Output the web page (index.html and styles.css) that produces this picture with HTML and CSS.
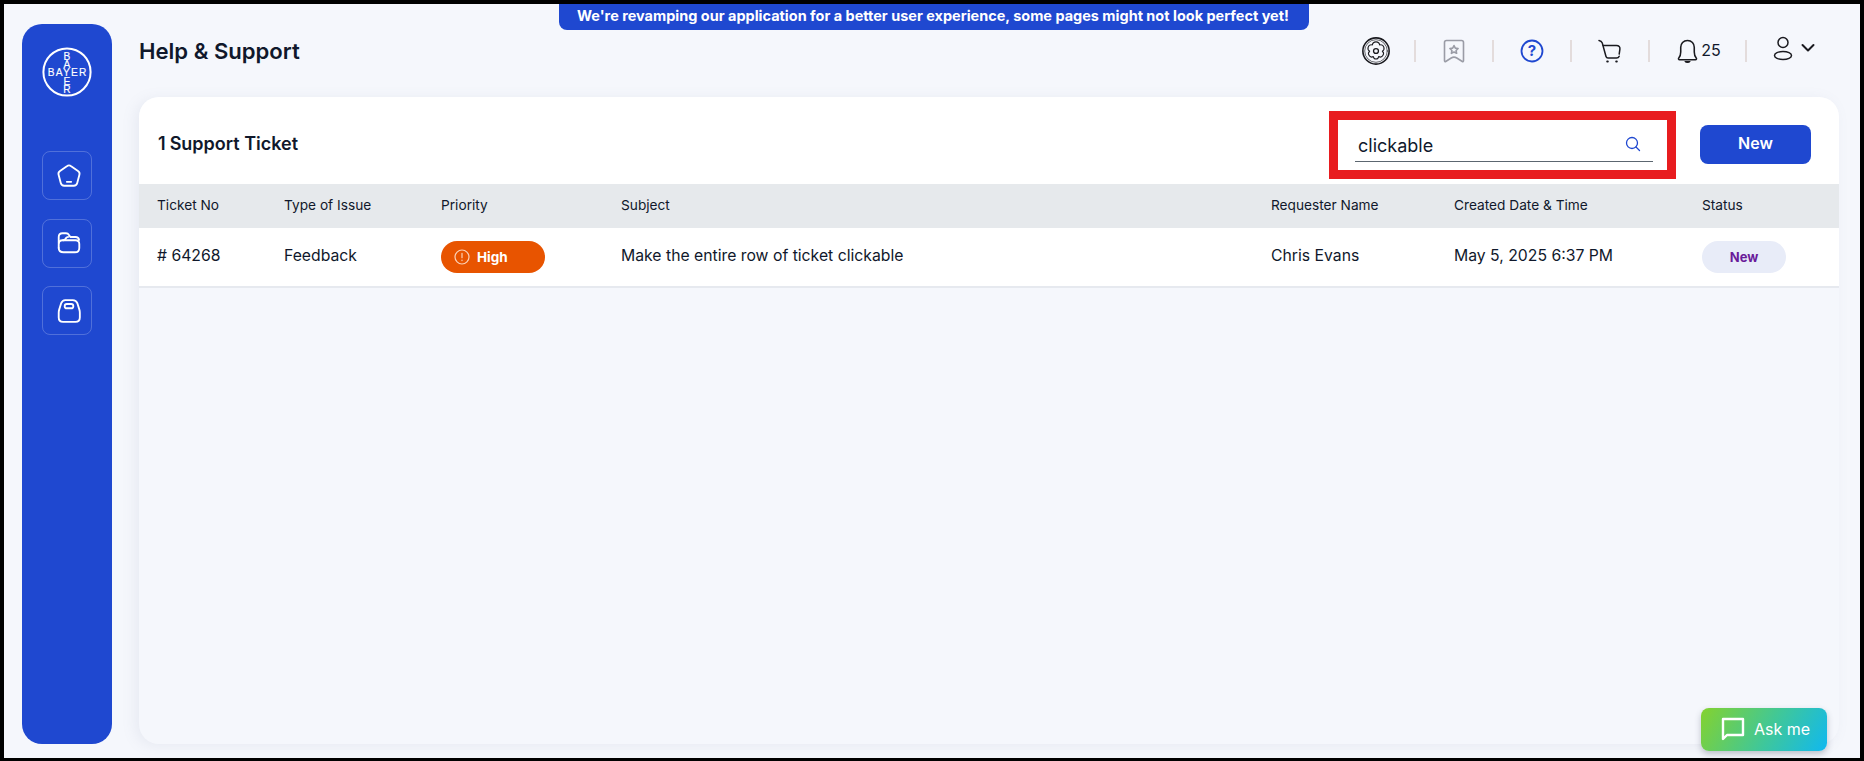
FILE: index.html
```html
<!DOCTYPE html>
<html lang="en">
<head>
<meta charset="utf-8">
<title>Help &amp; Support</title>
<link rel="stylesheet" href="styles.css">
</head>
<body>
<div class="frame">
  <div class="banner">We're revamping our application for a better user experience, some pages might not look perfect yet!</div>
  <aside class="sidebar">
    <svg class="logo" viewBox="0 0 50 50" width="50" height="50">
      <circle cx="25" cy="25" r="23.6" fill="none" stroke="#fff" stroke-width="2"/>
      <g class="logo-text" text-anchor="middle">
        <text class="logo-h" x="25.600" y="29.300">BAYER</text>
        <text x="25" y="12.500">B</text>
        <text x="25" y="20.900">A</text>
        <text x="25" y="37.700">E</text>
        <text x="25" y="46">R</text>
      </g>
    </svg>
    <nav class="side-nav">
      <a class="side-btn"><svg viewBox="0 0 24 24" width="26" height="26" class="side-icon"><path d="M10 2.900 3.700 7.300C2.500 8.100 2 9.500 2.400 10.900l2 7.600c.4 1.500 1.600 2.500 3.200 2.500h8.800c1.600 0 2.800-1 3.200-2.500l2-7.600c.4-1.400-.1-2.800-1.300-3.600L14 2.900c-1.200-.9-2.800-.9-4 0Z"/><path d="M10 17.400h4"/></svg></a>
      <a class="side-btn"><svg viewBox="0 0 24 24" width="26" height="26" class="side-icon"><path d="M2.500 12V6.500c0-2 1.500-3.500 3.500-3.500h3.200c1.200 0 2.200.6 2.800 1.600L13.200 6.500H18c1.800 0 3 1 3.300 2.700"/><path d="M2.500 16.500V13c0-2 1.500-3.500 3.500-3.500h.6c.9 0 1.500-.4 2-1.100l.6-.9c.5-.7 1.200-1.100 2-1.100"/><path d="M6.500 9.500H18c2 0 3.500 1.500 3.500 3.500v3.500c0 2.500-1.500 4-4 4H7c-2.800 0-4.500-1.500-4.500-4"/></svg></a>
      <a class="side-btn"><svg viewBox="0 0 24 24" width="26" height="26" class="side-icon"><path d="M8.500 2h7c2 0 3.500 1 4.300 3l1.700 5.500c.3 1 .5 2 .5 3V18c0 2.500-1.500 4-4 4H6.500c-2.500 0-4-1.500-4-4v-4.500c0-1 .2-2 .5-3L4.700 5c.8-2 1.800-3 3.800-3Z"/><rect x="8" y="5.500" width="8" height="4" rx="2"/></svg></a>
    </nav>
  </aside>
  <main class="main">
    <header class="topbar">
      <h1 class="title">Help &amp; Support</h1>
      <div class="tools">
        <span class="tool"><svg viewBox="0 0 26 26" width="28" height="28" class="ic-dark"><circle cx="13" cy="13" r="12.200" stroke-width="1.500"/><circle cx="13" cy="13" r="10.500" stroke-width=".6"/><path stroke-width="1" d="M13 4.500c1.900 0 3.200 1.300 3.400 2.900 1.600-.4 3.400.4 3.900 2.100.5 1.600-.2 3-1.400 3.700 1.100.9 1.400 2.500.6 3.800-.8 1.500-2.600 1.900-4 1.200-.3 1.400-1.400 2.300-2.500 2.300s-2.200-.9-2.500-2.300c-1.400.7-3.200.3-4-1.200-.8-1.300-.5-2.900.6-3.800-1.200-.7-1.900-2.100-1.400-3.700.5-1.700 2.300-2.500 3.900-2.100C9.800 5.800 11.100 4.500 13 4.500Z"/><circle cx="13" cy="13" r="2.300" stroke-width="1.200"/></svg></span>
        <span class="tool"><svg viewBox="0 0 22 24" width="22" height="24" class="ic-gray"><path d="M3.500 1.500h15c1.100 0 2 .9 2 2v18.300c0 .6-.6 1-1.200.7L13.800 19c-1.800-1.100-3.800-1.100-5.600 0l-5.500 3.500c-.6.300-1.200-.1-1.200-.7V3.500c0-1.100.9-2 2-2Z"/><path d="m11 6.500 1.300 2.600 2.800.4-2 2 .5 2.800-2.600-1.300-2.600 1.300.5-2.800-2-2 2.800-.4Z"/></svg></span>
        <span class="tool"><svg viewBox="0 0 24 24" width="24" height="24" class="ic-blue"><circle cx="12" cy="12" r="10.500"/></svg><b class="help-mark">?</b></span>
        <span class="tool"><svg viewBox="0 0 24 24" width="24" height="24" class="ic-dark"><path stroke-width="1.500" d="M1 1.500c1.600.2 2.700 1 3.300 2.600L8 17.500c.3 1 1 1.500 2 1.500h8.500c1.300 0 2.200-.6 2.700-1.800"/><path stroke-width="1.500" d="M5.200 6.500h13.300c2.400 0 3.700 1.500 3.400 3.600l-.7 5"/><path stroke-width="2" d="M9.200 22.500h.6M18.200 22.500h.6"/></svg></span>
        <span class="tool tool-bell"><svg viewBox="0 0 20 24" width="21" height="25" class="ic-dark"><path stroke-width="1.500" d="M10 1.500c-4 0-6.500 3-6.500 6.500v4.500c0 3-.8 4.700-2 6-.4.500 0 1.500.8 1.500h15.400c.8 0 1.200-1 .8-1.500-1.200-1.300-2-3-2-6V8c0-3.500-2.500-6.500-6.500-6.500Z"/><path d="M7.500 21.500c.5 1.400 4.500 1.400 5 0Z" class="bell-clap"/></svg><span class="bell-count">25</span></span>
        <span class="tool tool-user"><svg viewBox="0 0 20 26" width="20" height="26" class="ic-dark"><circle cx="10" cy="6.500" r="5" stroke-width="1.500"/><ellipse cx="10" cy="19.500" rx="8.500" ry="4" stroke-width="1.500"/></svg><svg viewBox="0 0 14 10" width="14" height="10" class="ic-dark chev"><path stroke-width="2" d="m1.500 2 5.500 5.500L12.500 2"/></svg></span>
      </div>
    </header>
    <section class="card">
      <div class="card-head">
        <h2 class="count"><span class="count-num">1</span>Support Ticket</h2>
        <div class="search-mark">
          <div class="search">
            <span class="search-text">clickable</span>
            <svg viewBox="0 0 16 16" width="16" height="16" class="ic-search"><circle cx="7" cy="7" r="5.500"/><path d="m11 11 3.500 3.500"/></svg>
          </div>
        </div>
        <button class="btn-new">New</button>
      </div>
      <table class="tickets">
        <colgroup>
          <col class="c1"><col class="c2"><col class="c3"><col class="c4"><col class="c5"><col class="c6"><col class="c7">
        </colgroup>
        <thead>
          <tr><th>Ticket No</th><th>Type of Issue</th><th>Priority</th><th>Subject</th><th>Requester Name</th><th>Created Date &amp; Time</th><th>Status</th></tr>
        </thead>
        <tbody>
          <tr>
            <td># 64268</td>
            <td>Feedback</td>
            <td><span class="pill-high"><svg viewBox="0 0 16 16" width="16" height="16" class="ic-alert"><circle cx="8" cy="8" r="7"/><path d="M8 4.300v4.400M8 11v.6"/></svg>High</span></td>
            <td>Make the entire row of ticket clickable</td>
            <td>Chris Evans</td>
            <td>May 5, 2025 6:37 PM</td>
            <td><span class="pill-new">New</span></td>
          </tr>
        </tbody>
      </table>
    </section>
  </main>
  <button class="ask"><svg viewBox="0 0 26 26" width="26" height="26" class="ic-chat"><path d="M3 3h20v16H7l-4 4Z"/></svg>Ask me</button>
</div>
</body>
</html>
```
FILE: styles.css
```css
* { box-sizing: border-box; }
html, body { margin: 0; height: 100%; }
body { font-family: Inter, "Noto Sans", sans-serif; color: #10182b; background: #f5f7fc; }

.frame {
  position: relative;
  height: 761px;
  border: solid #000;
  border-width: 4px 4px 3px 4px;
  background: #f5f7fc;
  display: flex;
  gap: 27px;
  padding: 20px 21px 14px 18px;
}

.banner {
  position: absolute;
  top: 0;
  left: 555px;
  width: 750px;
  height: 26px;
  padding-right: 2px;
  background: #1f48d0;
  color: #fff;
  font-size: 14.470px;
  font-weight: 700;
  line-height: 24px;
  text-align: center;
  white-space: nowrap;
  border-radius: 0 0 8px 8px;
}

.sidebar {
  width: 90px;
  flex: none;
  background: #1f48d0;
  border-radius: 20px;
  display: flex;
  flex-direction: column;
  align-items: center;
  padding-top: 23px;
}
.logo { display: block; }
.logo-text text { font-family: "Liberation Sans", sans-serif; font-size: 10.200px; font-weight: 400; fill: #fff; stroke: #fff; stroke-width: .15px; }
.logo-text .logo-h { letter-spacing: 1.200px; }
.side-nav { display: flex; flex-direction: column; gap: 18.500px; margin-top: 54px; }
.side-btn {
  width: 50px; height: 49px;
  border: 1px solid rgba(255,255,255,.22);
  border-radius: 8px;
  padding-left: 3px;
  display: flex; align-items: center; justify-content: center;
}
.side-icon { fill: none; stroke: #fff; stroke-width: 1.700; stroke-linecap: round; stroke-linejoin: round; }

.main { flex: 1; min-width: 0; display: flex; flex-direction: column; }
.topbar { height: 73px; flex: none; display: flex; justify-content: space-between; align-items: flex-start; }
.title { margin: 13px 0 0; font-size: 22.100px; font-weight: 600; line-height: 28px; color: #10182b; }

.tools { display: flex; align-items: center; height: 22px; margin-top: 16px; margin-right: 13px; }
.tool {
  position: relative;
  width: 78px; height: 22px;
  display: flex; align-items: center; justify-content: center;
  border-right: 2px solid #e3dcdc;
}
.tool:last-child { border-right: 0; }
.tool svg { flex: none; }
.ic-dark { fill: none; stroke: #1a1a1f; stroke-linecap: round; stroke-linejoin: round; }
.ic-gray { fill: none; stroke: #9a9ca6; stroke-width: 1.600; stroke-linejoin: round; }
.ic-blue { fill: none; stroke: #1f48d0; stroke-width: 1.800; }
.help-mark { position: absolute; color: #1f48d0; font-size: 15px; font-weight: 700; line-height: 24px; }
.tool-bell { width: 97px; padding-left: 3px; gap: 3px; }
.bell-clap { fill: #1a1a1f; stroke: #1a1a1f; }
.bell-count { font-size: 16px; line-height: 20px; color: #10182b; margin-top: -3px; }
.tool-user { width: 79px; padding-left: 15px; gap: 8px; margin-top: -5px; }
.chev { margin-top: -1px; }

.card {
  flex: 1;
  border-radius: 20px;
  background: #f5f7fc;
  box-shadow: -4px 2px 14px rgba(120,130,160,.10);
  overflow: hidden;
}
.card-head {
  height: 87px;
  background: #fff;
  display: flex;
  align-items: flex-start;
  padding: 14px 28px 0 19px;
}
.count { margin: 0; font-size: 18px; font-weight: 600; line-height: 24px; padding-top: 21px; color: #10182b; flex: 1; }
.count-num { margin-right: 4px; }
.search-mark {
  width: 347px; height: 68px;
  border: 9px solid #e81c1f;
  padding: 2px 14px 0 17px;
  flex: none;
}
.search {
  height: 40px;
  border-bottom: 1px solid #5c6670;
  display: flex; align-items: center; justify-content: space-between;
  padding: 8px 12px 0 3px;
}
.search-text { font-size: 18px; line-height: 24px; color: #10182b; }
.ic-search { fill: none; stroke: #1f48d0; stroke-width: 1.300; stroke-linecap: round; margin-top: -3px; }
.btn-new {
  width: 111px; height: 39px;
  margin: 14px 0 0 24px;
  border: 0; border-radius: 8px;
  background: #1f48d0; color: #fff;
  font: 600 16px/20px Inter, sans-serif;
  padding: 0 0 3px;
  flex: none;
}

.tickets { width: 100%; table-layout: fixed; border-collapse: collapse; }
.c1 { width: 145px; } .c2 { width: 157px; } .c3 { width: 180px; } .c4 { width: 650px; }
.c5 { width: 183px; } .c6 { width: 248px; } .c7 { width: 137px; }
.tickets th {
  height: 44px;
  background: #e6e9ec;
  font-size: 13.700px; font-weight: 400;
  text-align: left; padding: 0 0 2px;
  color: #10182b;
}
.tickets td {
  height: 59px;
  background: #fff;
  border-bottom: 2px solid #e6e9ef;
  font-size: 15.750px; font-weight: 400;
  padding: 0 0 3px;
  color: #10182b;
}
.tickets th:first-child, .tickets td:first-child { padding-left: 18px; }
.pill-high {
  width: 104px; height: 32px;
  border-radius: 16px;
  background: #e85400; color: #fff;
  font-size: 13.500px; font-weight: 700;
  display: flex; align-items: center;
  gap: 7px;
  padding-left: 13px;
  margin-top: 3px;
}
.ic-alert { fill: none; stroke: #fbd2b8; stroke-width: 1.200; stroke-linecap: round; }
.pill-new {
  width: 84px; height: 32px;
  border-radius: 16px;
  background: #e8ecf8; color: #6a1b9a;
  font-size: 13px; font-weight: 700;
  display: flex; align-items: center; justify-content: center;
  margin-top: 3px;
}

.ask {
  position: absolute;
  left: 1697px; top: 704px;
  width: 126px; height: 43px;
  border: 0; border-radius: 8px;
  background: linear-gradient(120deg, #84d22e 0%, #3fc79a 55%, #10b8f0 100%);
  box-shadow: 0 3px 6px rgba(60,70,90,.3);
  color: #fff;
  font: 400 16px/20px Inter, sans-serif;
  display: flex; align-items: center;
  gap: 8px;
  padding: 0 0 2px 19px;
}
.ic-chat { fill: none; stroke: #fff; stroke-width: 2.400; stroke-linejoin: round; }
```
